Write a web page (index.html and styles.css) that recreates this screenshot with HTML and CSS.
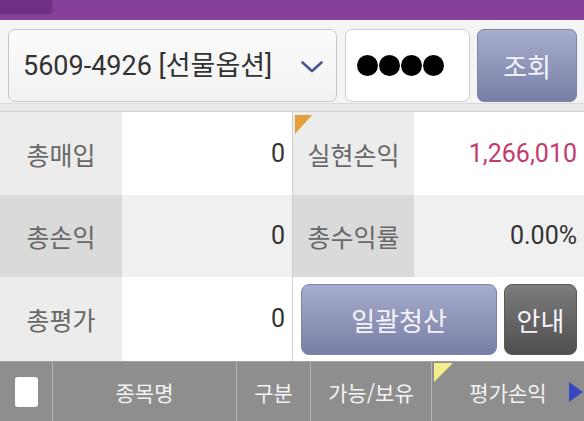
FILE: index.html
```html
<!DOCTYPE html>
<html lang="ko">
<head>
<meta charset="utf-8">
<link rel="stylesheet" href="styles.css">
</head>
<body>
<div class="screen">
  <div class="topbar"><div class="topbar-btn"></div></div>
  <div class="search">
    <div class="account">
      <span class="account-text">5609-4926 [선물옵션]</span>
      <svg class="chevron" width="22" height="12" viewBox="0 0 22 12"><polyline points="1.5,1.5 11,10 20.5,1.5" fill="none" stroke="#4b5594" stroke-width="2.6" stroke-linecap="round" stroke-linejoin="round"/></svg>
    </div>
    <div class="pwd"><span class="dot"></span><span class="dot"></span><span class="dot"></span><span class="dot"></span></div>
    <div class="btn btn-blue btn-query">조회</div>
  </div>
  <div class="band"></div>
  <div class="grid">
    <div class="cell label l1">총매입</div>
    <div class="cell value v1 sep">0</div>
    <div class="cell label l1 flagged"><span class="flag"></span>실현손익</div>
    <div class="cell value v1 pink">1,266,010</div>

    <div class="cell label l2">총손익</div>
    <div class="cell value v2 sep">0</div>
    <div class="cell label l2">총수익률</div>
    <div class="cell value v2">0.00%</div>

    <div class="cell label l1">총평가</div>
    <div class="cell value v1 sep">0</div>
    <div class="actions">
      <div class="btn btn-blue btn-wide">일괄청산</div>
      <div class="btn btn-dark btn-info">안내</div>
    </div>
  </div>
  <div class="thead">
    <div class="th th-check"><span class="checkbox"></span></div>
    <div class="th th-name">종목명</div>
    <div class="th th-type">구분</div>
    <div class="th th-qty">가능/보유</div>
    <div class="th th-pl"><span class="ytri"></span>평가손익<span class="btri"></span></div>
  </div>
</div>
</body>
</html>
```

FILE: styles.css
```css
* { box-sizing: border-box; }
html, body { margin: 0; padding: 0; }
body {
  width: 584px;
  height: 421px;
  overflow: hidden;
  background: #ffffff;
  font-family: "Roboto", "Noto Sans CJK KR", sans-serif;
}
.screen { width: 584px; height: 421px; display: flex; flex-direction: column; }

.topbar {
  height: 20px;
  background: #86409a;
  flex: none;
}
.topbar-btn {
  width: 53px;
  height: 15px;
  background: #6f2f82;
  border-bottom-right-radius: 5px;
  border-right: 1px solid #7c3c90;
  border-bottom: 1px solid #7c3c90;
}

.search {
  height: 84px;
  flex: none;
  background: #f4f4f4;
  border-bottom: 1px solid #d9d9d9;
  display: flex;
  align-items: flex-start;
  padding: 9px 7px 0 8px;
}
.account {
  width: 330px;
  height: 73px;
  border: 1px solid #c6c6c6;
  border-radius: 7px;
  background: linear-gradient(#fbfbfb, #f2f2f2);
  display: flex;
  align-items: center;
  justify-content: space-between;
  padding: 0 13px 0 14px;
}
.account-text {
  font-size: 27px;
  line-height: 32px;
  color: #333333;
}
.chevron { display: block; margin-top: 2px; }

.pwd {
  width: 125px;
  height: 73px;
  margin-left: 8px;
  border: 1px solid #cfcfcf;
  border-radius: 7px;
  background: #ffffff;
  display: flex;
  align-items: center;
  gap: 1px;
  padding-left: 11px;
}
.dot {
  width: 21px;
  height: 21px;
  border-radius: 50%;
  background: #000000;
}

.btn {
  display: flex;
  align-items: center;
  justify-content: center;
  font-family: "Noto Sans CJK KR", sans-serif;
  font-size: 26px;
  line-height: 30px;
  color: #f4f4fa;
  border-radius: 8px;
}
.btn-blue {
  background: linear-gradient(#a7adcd, #787fa6);
  border: 1px solid #7d84a9;
}
.btn-dark {
  background: linear-gradient(#7c7c7c, #4f4f4f);
  border: 1px solid #5a5a5a;
}
.btn-query {
  width: 100px;
  height: 73px;
  margin-left: 7px;
  border-radius: 7px;
}

.band {
  height: 8px;
  flex: none;
  background: #e9e9e9;
  border-bottom: 1px solid #d3d3d3;
}

.grid {
  flex: none;
  display: grid;
  grid-template-columns: 122px 171px 121px 170px;
  grid-template-rows: 83px 82px 84px;
}
.cell {
  display: flex;
  align-items: center;
}
.label {
  justify-content: center;
  font-family: "Noto Sans CJK KR", sans-serif;
  font-size: 25px;
  line-height: 30px;
  color: #686868;
}
.value {
  justify-content: flex-end;
  padding-right: 7px;
  font-size: 25px;
  line-height: 30px;
  color: #333333;
}
.sep { border-right: 1px solid #cfcfcf; }
.l1 { background: #ececec; }
.l2 { background: #dadada; }
.v1 { background: #ffffff; }
.v2 { background: #f0f0f0; }
.pink { color: #c33b6c; }

.flagged { position: relative; }
.flag {
  position: absolute;
  left: 2px;
  top: 3px;
  width: 0;
  height: 0;
  border-top: 19px solid #e2a03a;
  border-right: 17px solid transparent;
}

.actions {
  grid-column: 3 / 5;
  background: #ffffff;
  display: flex;
  align-items: flex-start;
  padding: 7px 7px 0 8px;
  gap: 7px;
}
.btn-wide { width: 196px; height: 71px; }
.btn-info { width: 73px; height: 71px; }

.thead {
  flex: 1;
  display: flex;
  background: #8e8e8e;
  border-top: 1px solid #a2a2a2;
}
.th {
  display: flex;
  align-items: center;
  justify-content: center;
  font-family: "Noto Sans CJK KR", sans-serif;
  font-size: 21px;
  line-height: 26px;
  color: #f3f3f3;
  border-right: 1px solid #b4b4b4;
}
.th-check { width: 53px; }
.th-name { width: 184px; }
.th-type { width: 74px; }
.th-qty { width: 121px; }
.th-pl { width: 152px; border-right: none; position: relative; }
.checkbox {
  width: 23px;
  height: 30px;
  background: #ffffff;
  border-radius: 3px;
  margin-left: 1px;
}
.ytri {
  position: absolute;
  left: 2px;
  top: 1px;
  width: 0;
  height: 0;
  border-top: 19px solid #f4ee8c;
  border-right: 19px solid transparent;
}
.btri {
  position: absolute;
  right: 1px;
  top: 20px;
  width: 0;
  height: 0;
  border-left: 14px solid #3b48c4;
  border-top: 10px solid transparent;
  border-bottom: 10px solid transparent;
}
```
